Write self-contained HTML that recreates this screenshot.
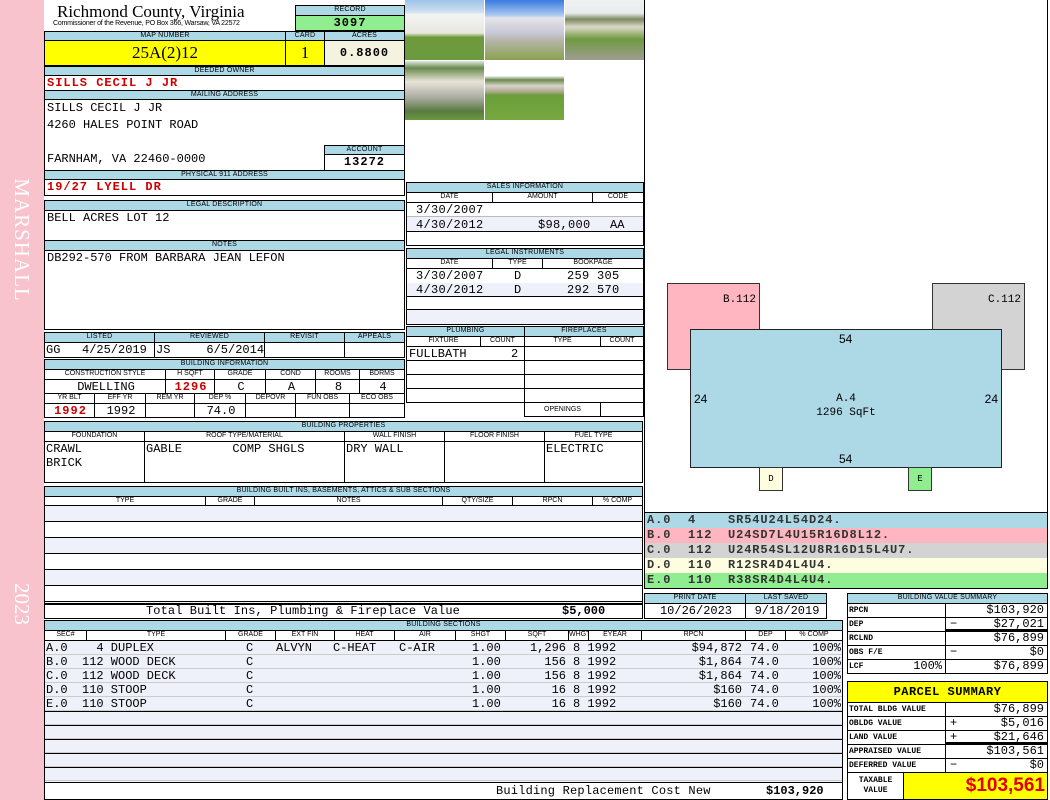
<!DOCTYPE html>
<html><head><meta charset="utf-8"><style>
*{margin:0;padding:0;box-sizing:border-box}
body{width:1050px;height:800px;background:#fff;position:relative;overflow:hidden;font-family:"Liberation Mono",monospace;font-size:12px;color:#000}
div,span{position:absolute}
.c{border:1px solid #000;overflow:hidden;white-space:nowrap}
.h{background:#add8e6;font:7px/8px "Liberation Sans",sans-serif;text-align:center;letter-spacing:0.2px}
.l{background:#fff;font:7px/8px "Liberation Sans",sans-serif;text-align:center}
.v{font:12px/14px "Liberation Mono",monospace;padding-left:2px}
.r{text-align:right;padding-right:3px}
.ce{text-align:center}
.red{color:#c00;font-weight:bold;letter-spacing:1px}
.st{background:#eef1fa}
.lg{font:bold 12px/15px "Liberation Mono",monospace;color:#333;letter-spacing:0.9px}
</style></head><body>
<div style="left:0;top:0;width:44px;height:800px;background:#f8c3cd"></div>
<div style="left:-48px;top:228px;width:140px;height:24px;transform:rotate(90deg);color:#fff;font:21px/24px 'Liberation Serif',serif;text-align:center;letter-spacing:1px">MARSHALL</div>
<div style="left:-8px;top:592px;width:60px;height:24px;transform:rotate(90deg);color:#fff;font:21px/24px 'Liberation Serif',serif;text-align:center">2023</div>

<div style="left:57px;top:2px;font:17px/19px 'Liberation Serif',serif">Richmond County, Virginia</div>
<div style="left:53px;top:20px;font:7px/8px 'Liberation Sans',sans-serif;letter-spacing:-0.2px">Commissioner of the Revenue, PO Box 366, Warsaw, VA 22572</div>
<div class="c h" style="left:295px;top:5px;width:110px;height:11px">RECORD</div>
<div class="c" style="left:295px;top:15px;width:110px;height:16px;background:#90ee90;font:bold 12px/14px 'Liberation Mono',monospace;text-align:center;letter-spacing:1px">3097</div>

<div class="c h" style="left:44px;top:31px;width:242px;height:10px">MAP NUMBER</div>
<div class="c h" style="left:285px;top:31px;width:40px;height:10px">CARD</div>
<div class="c h" style="left:324px;top:31px;width:81px;height:10px">ACRES</div>
<div class="c" style="left:44px;top:40px;width:242px;height:26px;background:#ffff00;font:17px/24px 'Liberation Serif',serif;text-align:center">25A(2)12</div>
<div class="c" style="left:285px;top:40px;width:40px;height:26px;background:#ffff00;font:17px/24px 'Liberation Serif',serif;text-align:center">1</div>
<div class="c" style="left:324px;top:40px;width:81px;height:26px;background:#f4f3e0;font:bold 12px/24px 'Liberation Mono',monospace;text-align:center;letter-spacing:1px">0.8800</div>

<div class="c h" style="left:44px;top:66px;width:361px;height:10px">DEEDED OWNER</div>
<div class="c v red" style="left:44px;top:75px;width:361px;height:16px;line-height:15px">SILLS CECIL J JR</div>
<div class="c h" style="left:44px;top:90px;width:361px;height:10px">MAILING ADDRESS</div>
<div class="c v" style="left:44px;top:99px;width:361px;height:72px;line-height:17px;white-space:pre;padding-top:0">SILLS CECIL J JR
4260 HALES POINT ROAD

FARNHAM, VA 22460-0000</div>
<div class="c h" style="left:324px;top:145px;width:81px;height:10px">ACCOUNT</div>
<div class="c" style="left:324px;top:154px;width:81px;height:17px;font:bold 12px/15px 'Liberation Mono',monospace;text-align:center;letter-spacing:1px">13272</div>
<div class="c h" style="left:44px;top:170px;width:361px;height:10px">PHYSICAL 911 ADDRESS</div>
<div class="c v red" style="left:44px;top:179px;width:361px;height:17px;line-height:15px">19/27 LYELL DR</div>

<div class="c h" style="left:44px;top:200px;width:361px;height:11px">LEGAL DESCRIPTION</div>
<div class="c v" style="left:44px;top:210px;width:361px;height:31px">BELL ACRES LOT 12</div>
<div class="c h" style="left:44px;top:240px;width:361px;height:11px">NOTES</div>
<div class="c v" style="left:44px;top:250px;width:361px;height:80px">DB292-570 FROM BARBARA JEAN LEFON</div>

<div class="c h" style="left:44px;top:332px;width:111px;height:11px">LISTED</div>
<div class="c h" style="left:154px;top:332px;width:111px;height:11px">REVIEWED</div>
<div class="c h" style="left:264px;top:332px;width:81px;height:11px">REVISIT</div>
<div class="c h" style="left:344px;top:332px;width:61px;height:11px">APPEALS</div>
<div class="c v" style="left:44px;top:342px;width:111px;height:16px;white-space:pre;padding-left:1px">GG   4/25/2019</div>
<div class="c v" style="left:154px;top:342px;width:111px;height:16px;white-space:pre;padding-left:1px">JS     6/5/2014</div>
<div class="c" style="left:264px;top:342px;width:81px;height:16px"></div>
<div class="c" style="left:344px;top:342px;width:61px;height:16px"></div>

<div class="c h" style="left:44px;top:359px;width:361px;height:11px">BUILDING INFORMATION</div>
<div class="c l" style="left:44px;top:369px;width:122px;height:11px">CONSTRUCTION STYLE</div>
<div class="c l" style="left:165px;top:369px;width:50px;height:11px">H SQFT</div>
<div class="c l" style="left:214px;top:369px;width:52px;height:11px">GRADE</div>
<div class="c l" style="left:265px;top:369px;width:51px;height:11px">COND</div>
<div class="c l" style="left:315px;top:369px;width:45px;height:11px">ROOMS</div>
<div class="c l" style="left:359px;top:369px;width:46px;height:11px">BDRMS</div>
<div class="c v ce" style="left:44px;top:379px;width:122px;height:15px">DWELLING</div>
<div class="c v ce red" style="left:165px;top:379px;width:50px;height:15px">1296</div>
<div class="c v ce" style="left:214px;top:379px;width:52px;height:15px">C</div>
<div class="c v ce" style="left:265px;top:379px;width:51px;height:15px">A</div>
<div class="c v ce" style="left:315px;top:379px;width:45px;height:15px">8</div>
<div class="c v ce" style="left:359px;top:379px;width:46px;height:15px">4</div>
<div class="c l" style="left:44px;top:393px;width:51px;height:11px">YR BLT</div>
<div class="c l" style="left:94px;top:393px;width:52px;height:11px">EFF YR</div>
<div class="c l" style="left:145px;top:393px;width:50px;height:11px">REM YR</div>
<div class="c l" style="left:194px;top:393px;width:52px;height:11px">DEP %</div>
<div class="c l" style="left:245px;top:393px;width:51px;height:11px">DEPOVR</div>
<div class="c l" style="left:295px;top:393px;width:55px;height:11px">FUN OBS</div>
<div class="c l" style="left:349px;top:393px;width:56px;height:11px">ECO OBS</div>
<div class="c v ce red" style="left:44px;top:403px;width:51px;height:15px">1992</div>
<div class="c v ce" style="left:94px;top:403px;width:52px;height:15px">1992</div>
<div class="c" style="left:145px;top:403px;width:50px;height:15px"></div>
<div class="c v ce" style="left:194px;top:403px;width:52px;height:15px">74.0</div>
<div class="c" style="left:245px;top:403px;width:51px;height:15px"></div>
<div class="c" style="left:295px;top:403px;width:55px;height:15px"></div>
<div class="c" style="left:349px;top:403px;width:56px;height:15px"></div>

<!-- photos -->
<div style="left:405px;top:0;width:79px;height:60px;background:linear-gradient(#9ec4ea 0,#cfe0f0 20%,#f3f3f3 24%,#e8e8e0 55%,#6f9a3a 62%,#6a9a40 100%)"></div>
<div style="left:485px;top:0;width:79px;height:60px;background:linear-gradient(#3a7ae0 0,#a9c8f0 25%,#e5e5ea 30%,#c8c8d8 55%,#b8b8b0 65%,#8aa050 100%)"></div>
<div style="left:565px;top:0;width:79px;height:60px;background:linear-gradient(#f0f2f2 0,#e8ecec 22%,#7a8a60 32%,#ddd8c8 45%,#6f9a40 65%,#a09c90 100%)"></div>
<div style="left:405px;top:61px;width:79px;height:59px;background:linear-gradient(#e0e8e0 0,#6a8a50 12%,#e8e4d8 35%,#b0b0a8 60%,#5a7a40 85%,#6a9a40 100%)"></div>
<div style="left:485px;top:61px;width:79px;height:59px;background:linear-gradient(#fff 0,#fff 25%,#6a8a50 32%,#d8d4c8 42%,#b0a890 52%,#6a9e3a 58%,#78a840 100%)"></div>

<!-- sales -->
<div class="c h" style="left:406px;top:182px;width:238px;height:11px">SALES INFORMATION</div>
<div class="c l" style="left:406px;top:192px;width:87px;height:11px">DATE</div>
<div class="c l" style="left:492px;top:192px;width:101px;height:11px">AMOUNT</div>
<div class="c l" style="left:592px;top:192px;width:52px;height:11px">CODE</div>
<div class="c" style="left:406px;top:202px;width:238px;height:44px"></div>
<div class="st" style="left:407px;top:217px;width:236px;height:14px"></div>
<div style="left:407px;top:216px;width:236px;border-top:1px solid #bbb"></div>
<div style="left:407px;top:231px;width:236px;border-top:1px solid #000"></div>
<div class="v" style="left:414px;top:203px;letter-spacing:0.3px">3/30/2007</div>
<div class="v" style="left:414px;top:218px;letter-spacing:0.3px">4/30/2012</div>
<div class="v" style="left:536px;top:218px;letter-spacing:0.3px">$98,000</div>
<div class="v" style="left:608px;top:218px">AA</div>

<div class="c h" style="left:406px;top:248px;width:238px;height:11px">LEGAL INSTRUMENTS</div>
<div class="c l" style="left:406px;top:258px;width:87px;height:11px">DATE</div>
<div class="c l" style="left:492px;top:258px;width:51px;height:11px">TYPE</div>
<div class="c l" style="left:542px;top:258px;width:102px;height:11px">BOOKPAGE</div>
<div class="c" style="left:406px;top:268px;width:238px;height:57px"></div>
<div class="st" style="left:407px;top:283px;width:236px;height:13px"></div>
<div class="st" style="left:407px;top:310px;width:236px;height:14px"></div>
<div style="left:407px;top:296px;width:236px;border-top:1px solid #000"></div>
<div style="left:407px;top:309px;width:236px;border-top:1px solid #000"></div>
<div class="v" style="left:414px;top:269px;letter-spacing:0.3px">3/30/2007</div>
<div class="v" style="left:414px;top:283px;letter-spacing:0.3px">4/30/2012</div>
<div class="v" style="left:512px;top:269px">D</div><div class="v" style="left:512px;top:283px">D</div>
<div class="v" style="left:565px;top:269px;letter-spacing:0.3px">259 305</div>
<div class="v" style="left:565px;top:283px;letter-spacing:0.3px">292 570</div>

<!-- plumbing / fireplaces -->
<div class="c h" style="left:406px;top:326px;width:119px;height:11px">PLUMBING</div>
<div class="c h" style="left:524px;top:326px;width:120px;height:11px">FIREPLACES</div>
<div class="c l" style="left:406px;top:336px;width:75px;height:11px">FIXTURE</div>
<div class="c l" style="left:480px;top:336px;width:45px;height:11px">COUNT</div>
<div class="c l" style="left:524px;top:336px;width:77px;height:11px">TYPE</div>
<div class="c l" style="left:600px;top:336px;width:44px;height:11px">COUNT</div>
<div class="c" style="left:406px;top:346px;width:119px;height:57px"></div>
<div class="c" style="left:524px;top:346px;width:120px;height:57px"></div>
<div style="left:407px;top:360px;width:236px;border-top:1px solid #000"></div>
<div style="left:407px;top:374px;width:236px;border-top:1px solid #000"></div>
<div style="left:407px;top:388px;width:236px;border-top:1px solid #000"></div>
<div class="v" style="left:407px;top:347px">FULLBATH</div>
<div class="v" style="left:509px;top:347px">2</div>
<div class="c l" style="left:524px;top:402px;width:77px;height:15px;line-height:13px">OPENINGS</div>
<div class="c" style="left:600px;top:402px;width:44px;height:15px"></div>

<!-- building properties -->
<div class="c h" style="left:44px;top:421px;width:599px;height:11px">BUILDING PROPERTIES</div>
<div class="c l" style="left:44px;top:431px;width:101px;height:11px">FOUNDATION</div>
<div class="c l" style="left:144px;top:431px;width:201px;height:11px">ROOF TYPE/MATERIAL</div>
<div class="c l" style="left:344px;top:431px;width:101px;height:11px">WALL FINISH</div>
<div class="c l" style="left:444px;top:431px;width:101px;height:11px">FLOOR FINISH</div>
<div class="c l" style="left:544px;top:431px;width:99px;height:11px">FUEL TYPE</div>
<div class="c v" style="left:44px;top:441px;width:101px;height:42px;line-height:14px;white-space:pre;padding-left:1px">CRAWL
BRICK</div>
<div class="c v" style="left:144px;top:441px;width:201px;height:42px;line-height:14px;white-space:pre;padding-left:1px">GABLE       COMP SHGLS</div>
<div class="c v" style="left:344px;top:441px;width:101px;height:42px;line-height:14px;padding-left:1px">DRY WALL</div>
<div class="c" style="left:444px;top:441px;width:101px;height:42px"></div>
<div class="c v" style="left:544px;top:441px;width:99px;height:42px;line-height:14px;padding-left:1px">ELECTRIC</div>

<!-- built ins -->
<div class="c h" style="left:44px;top:486px;width:599px;height:11px">BUILDING BUILT INS, BASEMENTS, ATTICS &amp; SUB SECTIONS</div>
<div class="c l" style="left:44px;top:496px;width:162px;height:10px">TYPE</div>
<div class="c l" style="left:205px;top:496px;width:50px;height:10px">GRADE</div>
<div class="c l" style="left:254px;top:496px;width:189px;height:10px">NOTES</div>
<div class="c l" style="left:442px;top:496px;width:71px;height:10px">QTY/SIZE</div>
<div class="c l" style="left:512px;top:496px;width:81px;height:10px">RPCN</div>
<div class="c l" style="left:592px;top:496px;width:51px;height:10px">% COMP</div>
<div class="c" style="left:44px;top:505px;width:599px;height:100px;background:repeating-linear-gradient(#eef1fa 0,#eef1fa 15px,#000 15px,#000 16px,#fff 16px,#fff 31px,#000 31px,#000 32px)"></div>
<div class="c" style="left:44px;top:603px;width:599px;height:16px;font:12px/14px 'Liberation Mono',monospace"><span style="left:101px;letter-spacing:0.1px">Total Built Ins, Plumbing &amp; Fireplace Value</span><span style="left:517px;font-weight:bold">$5,000</span></div>

<!-- sketch -->
<div style="left:644px;top:0;width:1px;height:512px;background:#000"></div>
<div style="left:1047px;top:0;width:1px;height:512px;background:#000"></div>
<div style="left:667px;top:283px;width:93px;height:87px;background:#ffb6c1;border:1px solid #333;font:11px 'Liberation Mono',monospace;text-align:right;padding:10px 3px 0 0">B.112</div>
<div style="left:932px;top:283px;width:93px;height:87px;background:#d3d3d3;border:1px solid #333;font:11px 'Liberation Mono',monospace;text-align:right;padding:10px 3px 0 0">C.112</div>
<div style="left:690px;top:329px;width:312px;height:139px;background:#add8e6;border:1px solid #222;font:12px 'Liberation Sans',sans-serif">
<span style="left:148px;top:2px">54</span>
<span style="left:148px;top:122px">54</span>
<span style="left:3px;top:62px">24</span>
<span style="right:3px;top:62px">24</span>
<span style="left:0;width:310px;top:62px;text-align:center;font:11px/14px 'Liberation Mono',monospace">A.4<br>1296 SqFt</span></div>
<div style="left:759px;top:467px;width:24px;height:24px;background:#fffde0;border:1px solid #333;font:9px/22px 'Liberation Mono',monospace;text-align:center">D</div>
<div style="left:908px;top:467px;width:24px;height:24px;background:#90ee90;border:1px solid #333;font:9px/22px 'Liberation Mono',monospace;text-align:center">E</div>

<!-- legend -->
<div style="left:644px;top:512px;width:404px;height:77px;border:1px solid #000"></div>
<div class="lg" style="left:645px;top:513px;width:402px;height:15px;background:#add8e6"><span style="left:2px">A.0</span><span style="left:43px">4</span><span style="left:83px">SR54U24L54D24.</span></div>
<div class="lg" style="left:645px;top:528px;width:402px;height:15px;background:#ffb6c1"><span style="left:2px">B.0</span><span style="left:43px">112</span><span style="left:83px">U24SD7L4U15R16D8L12.</span></div>
<div class="lg" style="left:645px;top:543px;width:402px;height:15px;background:#d3d3d3"><span style="left:2px">C.0</span><span style="left:43px">112</span><span style="left:83px">U24R54SL12U8R16D15L4U7.</span></div>
<div class="lg" style="left:645px;top:558px;width:402px;height:15px;background:#fffde0"><span style="left:2px">D.0</span><span style="left:43px">110</span><span style="left:83px">R12SR4D4L4U4.</span></div>
<div class="lg" style="left:645px;top:573px;width:402px;height:15px;background:#90ee90"><span style="left:2px">E.0</span><span style="left:43px">110</span><span style="left:83px">R38SR4D4L4U4.</span></div>

<!-- print date -->
<div class="c h" style="left:644px;top:593px;width:102px;height:11px">PRINT DATE</div>
<div class="c h" style="left:745px;top:593px;width:82px;height:11px">LAST SAVED</div>
<div class="c v ce" style="left:644px;top:603px;width:102px;height:16px">10/26/2023</div>
<div class="c v ce" style="left:745px;top:603px;width:82px;height:16px">9/18/2019</div>

<!-- building sections -->
<div class="c h" style="left:44px;top:620px;width:799px;height:11px">BUILDING SECTIONS</div>
<div class="c l" style="left:44px;top:630px;width:43px;height:11px">SEC#</div>
<div class="c l" style="left:86px;top:630px;width:140px;height:11px">TYPE</div>
<div class="c l" style="left:225px;top:630px;width:51px;height:11px">GRADE</div>
<div class="c l" style="left:275px;top:630px;width:60px;height:11px">EXT FIN</div>
<div class="c l" style="left:334px;top:630px;width:61px;height:11px">HEAT</div>
<div class="c l" style="left:394px;top:630px;width:62px;height:11px">AIR</div>
<div class="c l" style="left:455px;top:630px;width:51px;height:11px">SHGT</div>
<div class="c l" style="left:505px;top:630px;width:64px;height:11px">SQFT</div>
<div class="c l" style="left:568px;top:630px;width:21px;height:11px">WHGT</div>
<div class="c l" style="left:588px;top:630px;width:54px;height:11px">EYEAR</div>
<div class="c l" style="left:641px;top:630px;width:105px;height:11px">RPCN</div>
<div class="c l" style="left:745px;top:630px;width:41px;height:11px">DEP</div>
<div class="c l" style="left:785px;top:630px;width:58px;height:11px">% COMP</div>
<div class="c" style="left:44px;top:640px;width:799px;height:143px;background:repeating-linear-gradient(#eef1fa 0,#eef1fa 13px,#ccc 13px,#ccc 14px);"></div>
<div style="left:45px;top:711px;width:797px;height:1px;background:#000"></div>
<div style="left:45px;top:725px;width:797px;height:1px;background:#000"></div>
<div style="left:45px;top:739px;width:797px;height:1px;background:#000"></div>
<div style="left:45px;top:753px;width:797px;height:1px;background:#000"></div>
<div style="left:45px;top:767px;width:797px;height:1px;background:#000"></div>
<div style="left:44px;top:641px;width:799px;font:12px/14px 'Liberation Mono',monospace;white-space:pre">
<div style="left:2px;top:0">A.0</div><div style="left:2px;top:14px">B.0</div><div style="left:2px;top:28px">C.0</div><div style="left:2px;top:42px">D.0</div><div style="left:2px;top:56px">E.0</div>
<div style="left:38px;top:0">  4 DUPLEX</div><div style="left:38px;top:14px">112 WOOD DECK</div><div style="left:38px;top:28px">112 WOOD DECK</div><div style="left:38px;top:42px">110 STOOP</div><div style="left:38px;top:56px">110 STOOP</div>
<div style="left:202px;top:0">C</div><div style="left:202px;top:14px">C</div><div style="left:202px;top:28px">C</div><div style="left:202px;top:42px">C</div><div style="left:202px;top:56px">C</div>
<div style="left:232px;top:0">ALVYN</div><div style="left:289px;top:0">C-HEAT</div><div style="left:355px;top:0">C-AIR</div>
<div style="left:428px;top:0">1.00</div><div style="left:428px;top:14px">1.00</div><div style="left:428px;top:28px">1.00</div><div style="left:428px;top:42px">1.00</div><div style="left:428px;top:56px">1.00</div>
<div style="right:277px;top:0">1,296</div><div style="right:277px;top:14px">156</div><div style="right:277px;top:28px">156</div><div style="right:277px;top:42px">16</div><div style="right:277px;top:56px">16</div>
<div style="left:529px;top:0">8 1992</div><div style="left:529px;top:14px">8 1992</div><div style="left:529px;top:28px">8 1992</div><div style="left:529px;top:42px">8 1992</div><div style="left:529px;top:56px">8 1992</div>
<div style="right:101px;top:0">$94,872</div><div style="right:101px;top:14px">$1,864</div><div style="right:101px;top:28px">$1,864</div><div style="right:101px;top:42px">$160</div><div style="right:101px;top:56px">$160</div>
<div style="left:706px;top:0">74.0</div><div style="left:706px;top:14px">74.0</div><div style="left:706px;top:28px">74.0</div><div style="left:706px;top:42px">74.0</div><div style="left:706px;top:56px">74.0</div>
<div style="right:2px;top:0">100%</div><div style="right:2px;top:14px">100%</div><div style="right:2px;top:28px">100%</div><div style="right:2px;top:42px">100%</div><div style="right:2px;top:56px">100%</div>
</div>
<div class="c" style="left:44px;top:782px;width:799px;height:18px;font:12px/17px 'Liberation Mono',monospace;background:#fff"><span style="left:451px;letter-spacing:0.2px">Building Replacement Cost New</span><span style="left:721px;font-weight:bold">$103,920</span></div>

<!-- building value summary -->
<div class="c h" style="left:847px;top:593px;width:201px;height:11px">BUILDING VALUE SUMMARY</div>
<div style="left:847px;top:603px;width:201px;font:bold 8px/14px 'Liberation Mono',monospace">
<div class="c" style="left:0;top:0;width:99px;height:15px;padding-left:1px">RPCN</div><div class="c r" style="left:98px;top:0;width:103px;height:15px;font:12px/13px 'Liberation Mono',monospace">$103,920</div>
<div class="c" style="left:0;top:14px;width:99px;height:15px;padding-left:1px">DEP</div><div class="c r" style="left:98px;top:14px;width:103px;height:15px;font:12px/13px 'Liberation Mono',monospace;border-bottom:3px solid #000"><span style="left:4px">−</span>$27,021</div>
<div class="c" style="left:0;top:28px;width:99px;height:15px;padding-left:1px">RCLND</div><div class="c r" style="left:98px;top:28px;width:103px;height:15px;font:12px/13px 'Liberation Mono',monospace">$76,899</div>
<div class="c" style="left:0;top:42px;width:99px;height:15px;padding-left:1px">OBS F/E</div><div class="c r" style="left:98px;top:42px;width:103px;height:15px;font:12px/13px 'Liberation Mono',monospace"><span style="left:4px">−</span>$0</div>
<div class="c" style="left:0;top:56px;width:99px;height:15px;padding-left:1px">LCF<span style="right:3px;font:12px/13px 'Liberation Mono',monospace">100%</span></div><div class="c r" style="left:98px;top:56px;width:103px;height:15px;font:12px/13px 'Liberation Mono',monospace">$76,899</div>
</div>

<!-- parcel summary -->
<div class="c" style="left:847px;top:681px;width:201px;height:22px;background:#ffff00;font:bold 12px/20px 'Liberation Mono',monospace;text-align:center;letter-spacing:0.5px">PARCEL SUMMARY</div>
<div style="left:847px;top:702px;width:201px;font:bold 8px/13px 'Liberation Mono',monospace">
<div class="c" style="left:0;top:0;width:99px;height:15px;padding-left:1px">TOTAL BLDG VALUE</div><div class="c r" style="left:98px;top:0;width:103px;height:15px;font:12px/13px 'Liberation Mono',monospace">$76,899</div>
<div class="c" style="left:0;top:14px;width:99px;height:15px;padding-left:1px">OBLDG VALUE</div><div class="c r" style="left:98px;top:14px;width:103px;height:15px;font:12px/13px 'Liberation Mono',monospace"><span style="left:4px">+</span>$5,016</div>
<div class="c" style="left:0;top:28px;width:99px;height:15px;padding-left:1px">LAND VALUE</div><div class="c r" style="left:98px;top:28px;width:103px;height:15px;font:12px/13px 'Liberation Mono',monospace;border-bottom:3px solid #000"><span style="left:4px">+</span>$21,646</div>
<div class="c" style="left:0;top:42px;width:99px;height:15px;padding-left:1px">APPRAISED VALUE</div><div class="c r" style="left:98px;top:42px;width:103px;height:15px;font:12px/13px 'Liberation Mono',monospace">$103,561</div>
<div class="c" style="left:0;top:56px;width:99px;height:15px;padding-left:1px">DEFERRED VALUE</div><div class="c r" style="left:98px;top:56px;width:103px;height:15px;font:12px/13px 'Liberation Mono',monospace"><span style="left:4px">−</span>$0</div>
</div>
<div class="c" style="left:847px;top:772px;width:57px;height:28px;font:bold 8px/10px 'Liberation Mono',monospace;text-align:center;padding-top:3px">TAXABLE<br>VALUE</div>
<div class="c" style="left:903px;top:772px;width:145px;height:28px;background:#ffff00;color:#e00000;font:bold 19px/26px 'Liberation Sans',sans-serif;text-align:right;padding-right:2px">$103,561</div>
</body></html>
